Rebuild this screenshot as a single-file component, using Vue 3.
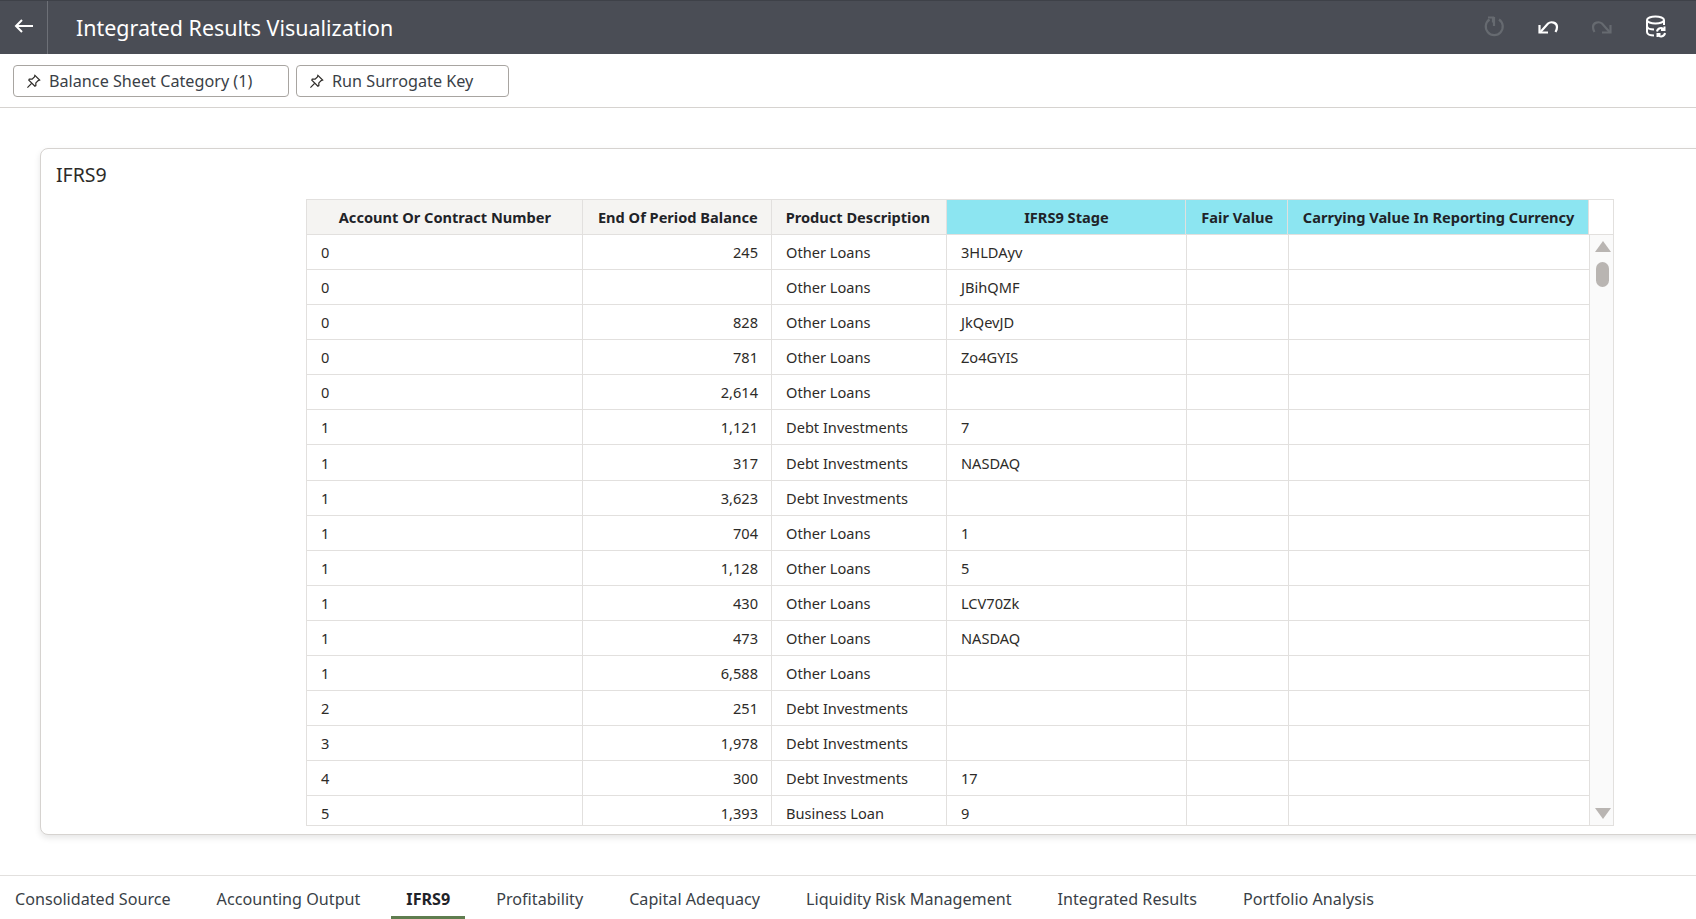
<script setup>
const rows = [
  ['0', '245', 'Other Loans', '3HLDAyv'],
  ['0', '', 'Other Loans', 'JBihQMF'],
  ['0', '828', 'Other Loans', 'JkQevJD'],
  ['0', '781', 'Other Loans', 'Zo4GYIS'],
  ['0', '2,614', 'Other Loans', ''],
  ['1', '1,121', 'Debt Investments', '7'],
  ['1', '317', 'Debt Investments', 'NASDAQ'],
  ['1', '3,623', 'Debt Investments', ''],
  ['1', '704', 'Other Loans', '1'],
  ['1', '1,128', 'Other Loans', '5'],
  ['1', '430', 'Other Loans', 'LCV70Zk'],
  ['1', '473', 'Other Loans', 'NASDAQ'],
  ['1', '6,588', 'Other Loans', ''],
  ['2', '251', 'Debt Investments', ''],
  ['3', '1,978', 'Debt Investments', ''],
  ['4', '300', 'Debt Investments', '17'],
  ['5', '1,393', 'Business Loan', '9']
]
const tabs = ['Consolidated Source', 'Accounting Output', 'IFRS9', 'Profitability', 'Capital Adequacy', 'Liquidity Risk Management', 'Integrated Results', 'Portfolio Analysis']
const filters = [
  { label: 'Balance Sheet Category (1)', cls: 'wide' },
  { label: 'Run Surrogate Key', cls: 'narrow' }
]
</script>

<template>
  <div class="page">
    <header class="top">
      <button class="back" aria-label="Back">
        <svg width="20" height="14" viewBox="0 0 20 14" fill="none" stroke="#fff" stroke-width="2"><path d="M19 7H2M8 1 2 7l6 6"/></svg>
      </button>
      <h1 class="title">Integrated Results Visualization</h1>
      <div class="actions">
        <svg width="24" height="24" viewBox="0 0 24 24" fill="none" stroke="#666a70" stroke-width="2.200"><path d="M7.500 5.500a8.500 8.500 0 1 0 9.500 0"/><path d="M12 3v9M6 3.500h5v5" /></svg>
        <svg width="24" height="24" viewBox="0 0 24 24" fill="none" stroke="#fff" stroke-width="2.200"><path d="M4 18.500 12 9.500c3-2.500 9-1 9 3.500 0 2-.5 3.500-1.500 5"/><path d="M3.500 11V18.500H12"/></svg>
        <svg width="24" height="24" viewBox="0 0 24 24" fill="none" stroke="#666a70" stroke-width="2.200"><path d="M20 18.500 12 9.500c-3-2.500-9-1-9 3.500 0 2 .5 3.500 1.500 5"/><path d="M20.500 11V18.500H12"/></svg>
        <svg width="24" height="24" viewBox="0 0 24 24" fill="none" stroke="#fff" stroke-width="2"><ellipse cx="11.500" cy="6" rx="8.500" ry="3.500"/><path d="M3 6v12c0 2 3 3.500 7 3.500M20 6v5M3 12c0 2 3 3.500 7 3.500"/><path d="M13 17.500a4 4 0 0 1 7-2M21 19a4 4 0 0 1-7 2"/><path d="M20.500 12.500v3.500H17M13.500 23v-3h3"/></svg>
      </div>
    </header>

    <div class="filters">
      <button v-for="f in filters" :key="f.label" class="chip" :class="f.cls">
        <svg width="15" height="15" viewBox="0 0 16 16" fill="none" stroke="#2d2b28" stroke-width="1.300"><path d="M9.500 1.500 14.500 6.500 13 7 10.500 9.500 10.500 12.500 9.500 13 3 6.500 3.500 5.500 6.500 5.500 9 3Z"/><path d="M6 10 1.500 14.500"/></svg>
        <span>{{ f.label }}</span>
      </button>
    </div>

    <section class="card">
      <h2 class="card-title">IFRS9</h2>
      <div class="grid">
        <div class="head">
          <div class="cell c1 th center">Account Or Contract Number</div>
          <div class="cell c2 th right">End Of Period Balance</div>
          <div class="cell c3 th">Product Description</div>
          <div class="cell c4 th center hl">IFRS9 Stage</div>
          <div class="cell c5 th center hl">Fair Value</div>
          <div class="cell c6 th center hl">Carrying Value In Reporting Currency</div>
          <div class="corner"></div>
        </div>
        <div class="body">
          <div class="rows">
            <div v-for="(r, i) in rows" :key="i" class="row">
              <div class="cell c1">{{ r[0] }}</div>
              <div class="cell c2 right">{{ r[1] }}</div>
              <div class="cell c3">{{ r[2] }}</div>
              <div class="cell c4">{{ r[3] }}</div>
              <div class="cell c5"></div>
              <div class="cell c6"></div>
            </div>
          </div>
          <div class="scroll">
            <span class="arrow up"></span>
            <span class="thumb"></span>
            <span class="arrow down"></span>
          </div>
        </div>
      </div>
    </section>

    <nav class="tabs">
      <a v-for="t in tabs" :key="t" class="tab" :class="{ active: t === 'IFRS9' }">{{ t }}</a>
    </nav>
  </div>
</template>

<style scoped>
.page {
  width: 1696px;
  height: 919px;
  overflow: hidden;
  background: #fff;
  font-family: "Noto Sans", "Open Sans", sans-serif;
  color: #2d2b28;
  display: flex;
  flex-direction: column;
}
.top {
  height: 54px;
  flex: none;
  display: flex;
  align-items: center;
  background: #4a4d55;
  border-top: 1px solid #3e4148;
  box-sizing: border-box;
}
.back {
  width: 48px;
  height: 53px;
  border: 0;
  border-right: 1px solid #6d7077;
  background: none;
  padding: 0 0 4px;
  display: flex;
  align-items: center;
  justify-content: center;
}
.title {
  margin: 0 0 0 28px;
  font-size: 21.450px;
  font-weight: 400;
  color: #fff;
}
.actions {
  margin-left: auto;
  display: flex;
  gap: 30px;
  padding-right: 28px;
  padding-bottom: 4px;
}
.filters {
  height: 54px;
  flex: none;
  box-sizing: border-box;
  border-bottom: 1px solid #d6d3d0;
  display: flex;
  gap: 7px;
  padding: 11px 0 0 13px;
}
.chip {
  height: 32px;
  box-sizing: border-box;
  border: 1px solid #a8a5a1;
  border-radius: 4px;
  background: #fff;
  display: flex;
  align-items: center;
  gap: 8px;
  padding: 0 0 0 12px;
  font: inherit;
  font-size: 16.200px;
  color: #3a3f47;
}
.wide { width: 276px; }
.narrow { width: 213px; }
.card {
  flex: none;
  width: 1700px;
  height: 687px;
  box-sizing: border-box;
  margin: 40px 0 0 40px;
  border: 1px solid #d6d3d0;
  border-radius: 8px;
  box-shadow: 0 3px 6px rgba(0, 0, 0, 0.1);
  background: #fff;
  padding: 13px 0 0 15px;
}
.card-title {
  margin: 0;
  font-size: 19.500px;
  line-height: 26px;
  font-weight: 400;
}
.grid {
  width: 1308px;
  height: 627px;
  margin: 11px 0 0 250px;
  border: 1px solid #e2e0de;
  box-sizing: border-box;
  font-size: 14.600px;
  overflow: hidden;
}
.head {
  display: flex;
  height: 35px;
  box-sizing: border-box;
  background: #f5f4f2;
  border-bottom: 1px solid #e2e0de;
}
.body {
  display: flex;
  height: 590px;
}
.rows { width: 1283px; overflow: hidden; }
.row {
  display: flex;
  height: 35.080px;
  box-sizing: border-box;
}
.cell {
  box-sizing: border-box;
  height: 100%;
  padding: 0 13px 0 14px;
  display: flex;
  align-items: center;
  border-right: 1px solid #e2e0de;
  border-bottom: 1px solid #e2e0de;
  white-space: nowrap;
}
.th {
  font-weight: 700;
  border-bottom: 0;
  color: #1f2328;
}
.center { justify-content: center; }
.right { justify-content: flex-end; }
.hl { background: #8ce5f1; }
.c1 { width: 276px; }
.c2 { width: 189px; }
.c3 { width: 175px; }
.c4 { width: 240px; }
.c5 { width: 102px; }
.c6 { width: 301px; }
.corner {
  width: 24px;
  background: #fff;
}
.scroll {
  width: 23px;
  background: #fafafa;
  position: relative;
}
.thumb {
  position: absolute;
  left: 6px;
  top: 27px;
  width: 13px;
  height: 25px;
  border-radius: 7px;
  background: #b9b5b2;
}
.arrow {
  position: absolute;
  left: 5px;
  width: 0;
  height: 0;
  border-left: 8px solid transparent;
  border-right: 8px solid transparent;
}
.up { top: 6px; border-bottom: 11px solid #b9b5b2; }
.down { bottom: 6px; border-top: 11px solid #b9b5b2; }
.tabs {
  flex: none;
  margin-top: 40px;
  border-top: 1px solid #e2e0de;
  height: 44px;
  box-sizing: border-box;
  display: flex;
  gap: 16px;
}
.tab {
  height: 43px;
  box-sizing: border-box;
  padding: 12px 15px 0;
  font-size: 16.150px;
  color: #3a3f47;
  border-bottom: 3px solid transparent;
}
.active {
  font-weight: 700;
  color: #1f2328;
  border-bottom-color: #5f7d4f;
}
</style>
